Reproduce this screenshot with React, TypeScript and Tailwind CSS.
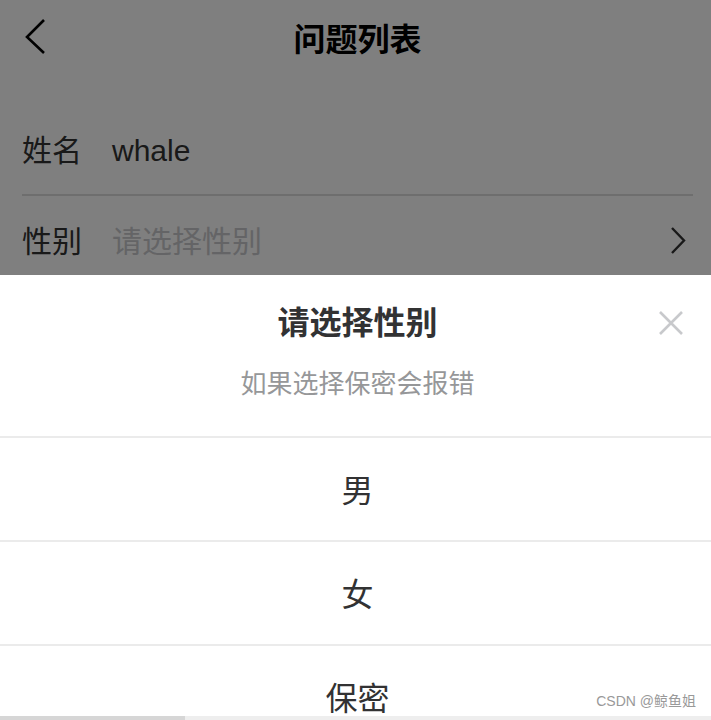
import React from "react";

const FONT = "font-['Liberation_Sans','Noto_Sans_CJK_SC',sans-serif]";

const options = ["男", "女", "保密"];

const BackIcon = () => (
  <svg width="24" height="40" viewBox="0 0 24 40" className="absolute left-[24px] top-[17px]">
    <polyline points="20,3 3,20 20,36" fill="none" stroke="#000" strokeWidth="2.6" />
  </svg>
);

const ArrowIcon = () => (
  <svg width="20" height="30" viewBox="0 0 20 30" className="text-[#323233]">
    <polyline points="3,2 15,14.5 3,27" fill="none" stroke="currentColor" strokeWidth="2.4" />
  </svg>
);

const CloseIcon = () => (
  <svg width="28" height="28" viewBox="0 0 28 28">
    <path d="M3 3 L25 25 M25 3 L3 25" stroke="#c8c9cc" strokeWidth="2.6" fill="none" />
  </svg>
);

const App: React.FC = () => {
  return (
    <div className={`relative w-[711px] h-[720px] overflow-hidden bg-white ${FONT}`}>
      {/* Page */}
      <header className="relative h-[80px] pl-[4px] flex items-center justify-center">
        <BackIcon />
        <h1 className="text-[32px] font-bold text-black leading-none">问题列表</h1>
      </header>

      <div className="mt-[26px] pl-[22px] pr-[18px]">
        <div className="h-[90px] flex items-center border-b-2 border-[#dcdcdc]">
          <span className="w-[90px] text-[30px] text-[#323233]">姓名</span>
          <span className="text-[30px] text-[#323233]">whale</span>
        </div>
        <div className="h-[90px] flex items-center">
          <span className="w-[90px] text-[30px] text-[#323233]">性别</span>
          <span className="flex-1 text-[30px] text-[#c8c9cc]">请选择性别</span>
          <span className="mr-[4px] flex items-center">
            <ArrowIcon />
          </span>
        </div>
      </div>

      {/* Overlay */}
      <div className="absolute inset-0 bg-black/50" />

      {/* Action sheet */}
      <div className="absolute left-0 right-0 top-[275px] bg-white text-[#323233]">
        <div className="relative h-[96px] pl-[4px] flex items-center justify-center">
          <span className="text-[32px] font-bold leading-none">请选择性别</span>
          <span className="absolute right-[26px] top-[34px] flex">
            <CloseIcon />
          </span>
        </div>
        <div className="pl-[4px] pb-[39px] text-center text-[26px] leading-[26px] text-[#969799]">
          如果选择保密会报错
        </div>
        {options.map((o) => (
          <div
            key={o}
            className="h-[104px] pl-[4px] pt-[3px] flex items-center justify-center border-t-2 border-[#ebebeb] text-[32px] leading-none"
          >
            {o}
          </div>
        ))}
      </div>

      <span className="absolute right-[15px] top-[694px] text-[14px] text-[#999] leading-none">
        CSDN @鲸鱼姐
      </span>

      <div className="absolute left-0 right-0 bottom-0 h-[4px] bg-[#eeeeee] flex">
        <div className="w-[185px] bg-[#d6d6d6]" />
      </div>
    </div>
  );
};

export default App;
